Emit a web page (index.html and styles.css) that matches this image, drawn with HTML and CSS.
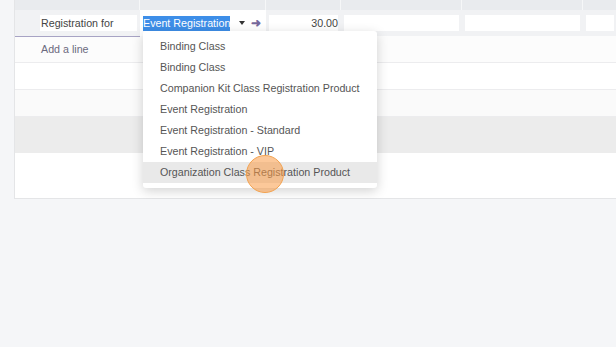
FILE: index.html
```html
<!DOCTYPE html>
<html lang="en">

<head>
    <meta charset="UTF-8">
    <meta name="viewport" content="width=device-width, initial-scale=1.0">
    <title>Order Lines</title>
    <link rel="stylesheet" href="styles.css">
</head>

<body>
    <div class="sheet">
        <div class="row head">
            <div class="cell"></div>
            <div class="cell"></div>
            <div class="cell"></div>
            <div class="cell"></div>
            <div class="cell"></div>
            <div class="cell"></div>
        </div>
        <div class="row editing">
            <div class="cell first"><span class="field label-field">Registration for</span></div>
            <div class="cell product">
                <span class="selected">Event Registration</span>
                <span class="caret"></span>
                <span class="go">&#10140;</span>
            </div>
            <div class="cell"><span class="field num">30.00</span></div>
            <div class="cell"><span class="field"></span></div>
            <div class="cell"><span class="field"></span></div>
            <div class="cell"><span class="field"></span></div>
        </div>
        <div class="row add">
            <a class="add-line">Add a line</a>
        </div>
        <div class="row blank"></div>
        <div class="row blank alt"></div>
        <div class="row total"></div>
        <div class="row foot"></div>

        <ul class="dropdown">
            <li>Binding Class</li>
            <li>Binding Class</li>
            <li>Companion Kit Class Registration Product</li>
            <li>Event Registration</li>
            <li>Event Registration - Standard</li>
            <li>Event Registration - VIP</li>
            <li class="active">Organization Class Registration Product</li>
        </ul>
        <span class="click"></span>
    </div>
</body>

</html>
```

FILE: styles.css
```css
body {
    font-family: Arial, "Liberation Sans", sans-serif;
    font-size: 10.7px;
    background-color: #f5f6f8;
    color: #555;
    margin: 0;
    overflow: hidden;
}

.sheet {
    position: relative;
    margin-left: 14px;
    width: 602px;
    background: #fff;
    border-left: 1px solid #e4e5e7;
    border-bottom: 1px solid #e4e5e7;
}

.row {
    display: grid;
    grid-template-columns: 125px 126px 75px 121px 121px 1fr;
}

.head {
    height: 10px;
    background: #e9ebee;
}

.head .cell {
    border-right: 1px solid #f6f7f8;
}

.editing {
    height: 26px;
    background: #f1f2f4;
    align-items: center;
}

.editing .cell {
    display: flex;
    align-items: center;
    height: 100%;
    padding: 0 3px;
}

.editing .first {
    border-bottom: 1px solid #a7a3c4;
}

.field {
    display: block;
    width: 100%;
    height: 16px;
    line-height: 16px;
    background: #fff;
}

.label-field {
    margin-left: 22px;
    padding-left: 1px;
    color: #444;
}

.num {
    text-align: right;
    color: #444;
}

.product {
    background: #fff;
    padding: 0 4px;
    white-space: nowrap;
}

.selected {
    background: #3d8ee8;
    color: #fff;
    line-height: 15px;
}

.caret {
    margin-left: 9px;
    border-left: 3px solid transparent;
    border-right: 3px solid transparent;
    border-top: 4px solid #333;
}

.go {
    margin-left: 6px;
    color: #76689c;
    font-size: 12px;
    font-weight: bold;
}

.add {
    display: block;
    height: 26px;
    line-height: 26px;
    padding-left: 26px;
    background: #fcfcfc;
    border-bottom: 1px solid #ececee;
}

.add-line {
    color: #6b6a7e;
}

.blank {
    height: 26px;
    border-bottom: 1px solid #ececee;
}

.alt {
    background: #fafafa;
}

.total {
    height: 36px;
    background: #ececec;
}

.foot {
    height: 45px;
}

.dropdown {
    position: absolute;
    left: 128px;
    top: 31px;
    width: 234px;
    margin: 0;
    padding: 5px 0;
    list-style: none;
    background: #fff;
    border-radius: 3px;
    box-shadow: 0 3px 12px rgba(0, 0, 0, 0.18);
}

.dropdown li {
    height: 21px;
    line-height: 21px;
    padding-left: 17px;
    color: #555;
    white-space: nowrap;
}

.dropdown li.active {
    background: #e9e9e9;
}

.click {
    position: absolute;
    left: 231px;
    top: 155px;
    width: 36px;
    height: 36px;
    border-radius: 50%;
    background: rgba(250, 155, 70, 0.55);
    border: 1.5px solid #f3a24f;
}
```
